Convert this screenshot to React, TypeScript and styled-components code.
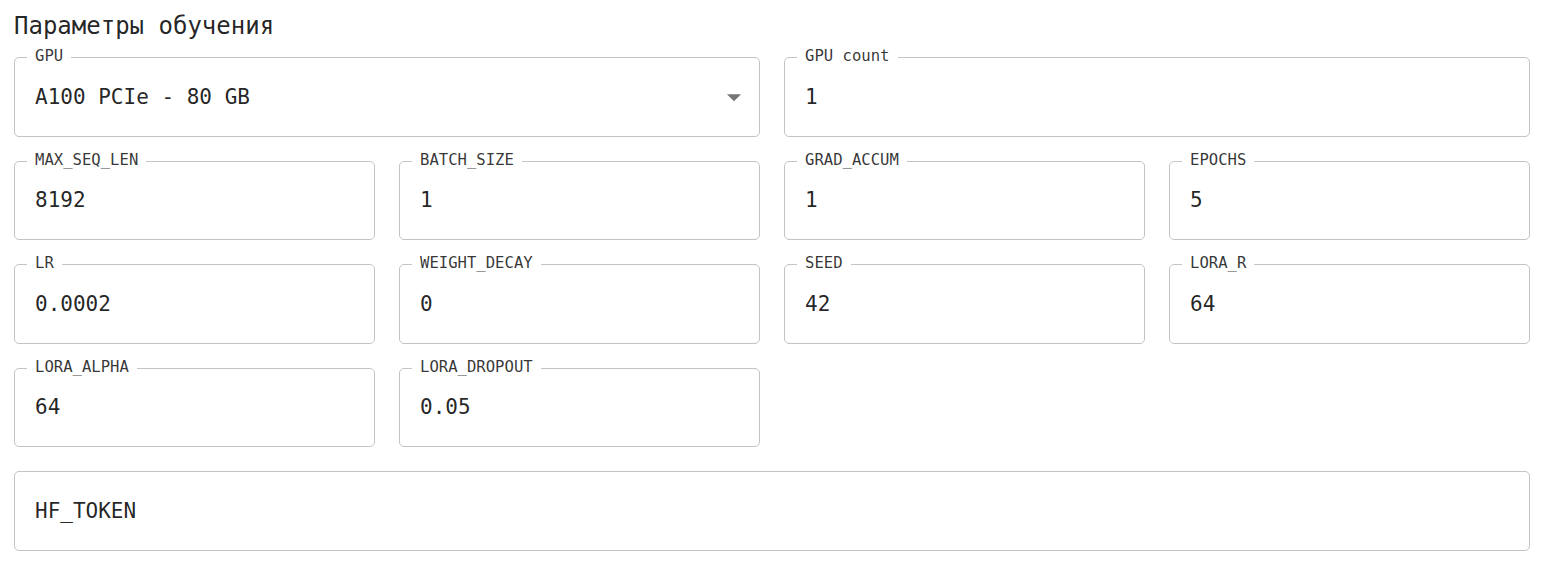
import React from "react";
import styled, { createGlobalStyle } from "styled-components";

const Global = createGlobalStyle`
  html, body { margin: 0; padding: 0; background: #ffffff; }
  body { font-family: "DejaVu Sans Mono", "Liberation Mono", monospace; }
`;

const Page = styled.div`
  padding: 10px 14px 14px 14px;
  display: flex;
  flex-direction: column;
`;

const Title = styled.h2`
  margin: 0 0 15px 0;
  font-size: 24px;
  line-height: 32px;
  font-weight: 400;
  color: rgba(0, 0, 0, 0.87);
`;

const Grid = styled.div`
  display: grid;
  grid-template-columns: repeat(4, 1fr);
  column-gap: 24px;
  row-gap: 24px;
`;

const Field = styled.div<{ $span?: number }>`
  position: relative;
  grid-column: span ${(p) => p.$span ?? 1};
  height: 79.5px;
  box-sizing: border-box;
  border: 1px solid #c4c4c4;
  border-radius: 5px;
  display: flex;
  align-items: center;
  padding: 0 20px;
`;

const Label = styled.span`
  position: absolute;
  top: -12px;
  left: 12px;
  padding: 0 8px;
  background: #ffffff;
  font-size: 15.6px;
  line-height: 20px;
  color: rgba(0, 0, 0, 0.8);
  white-space: nowrap;
`;

const Value = styled.span`
  flex: 1;
  font-size: 21px;
  line-height: 28px;
  color: rgba(0, 0, 0, 0.87);
  white-space: nowrap;
`;

const Arrow = styled.svg`
  width: 34px;
  height: 34px;
  margin-right: -12px;
  fill: rgba(0, 0, 0, 0.54);
  flex: none;
`;

const Spacer = styled.div<{ $span: number }>`
  grid-column: span ${(p) => p.$span};
`;

type F = { label?: string; value?: string; span?: number; select?: boolean; empty?: boolean };

const fields: F[] = [
  { label: "GPU", value: "A100 PCIe - 80 GB", span: 2, select: true },
  { label: "GPU count", value: "1", span: 2 },
  { label: "MAX_SEQ_LEN", value: "8192" },
  { label: "BATCH_SIZE", value: "1" },
  { label: "GRAD_ACCUM", value: "1" },
  { label: "EPOCHS", value: "5" },
  { label: "LR", value: "0.0002" },
  { label: "WEIGHT_DECAY", value: "0" },
  { label: "SEED", value: "42" },
  { label: "LORA_R", value: "64" },
  { label: "LORA_ALPHA", value: "64" },
  { label: "LORA_DROPOUT", value: "0.05" },
  { empty: true, span: 2 },
  { value: "HF_TOKEN", span: 4 },
];

export default function App() {
  return (
    <Page>
      <Global />
      <Title>Параметры обучения</Title>
      <Grid>
        {fields.map((f, i) =>
          f.empty ? (
            <Spacer key={i} $span={f.span ?? 1} />
          ) : (
            <Field key={i} $span={f.span}>
              {f.label && <Label>{f.label}</Label>}
              <Value>{f.value}</Value>
              {f.select && (
                <Arrow viewBox="0 0 24 24">
                  <path d="M7 10l5 5 5-5z" />
                </Arrow>
              )}
            </Field>
          )
        )}
      </Grid>
    </Page>
  );
}
